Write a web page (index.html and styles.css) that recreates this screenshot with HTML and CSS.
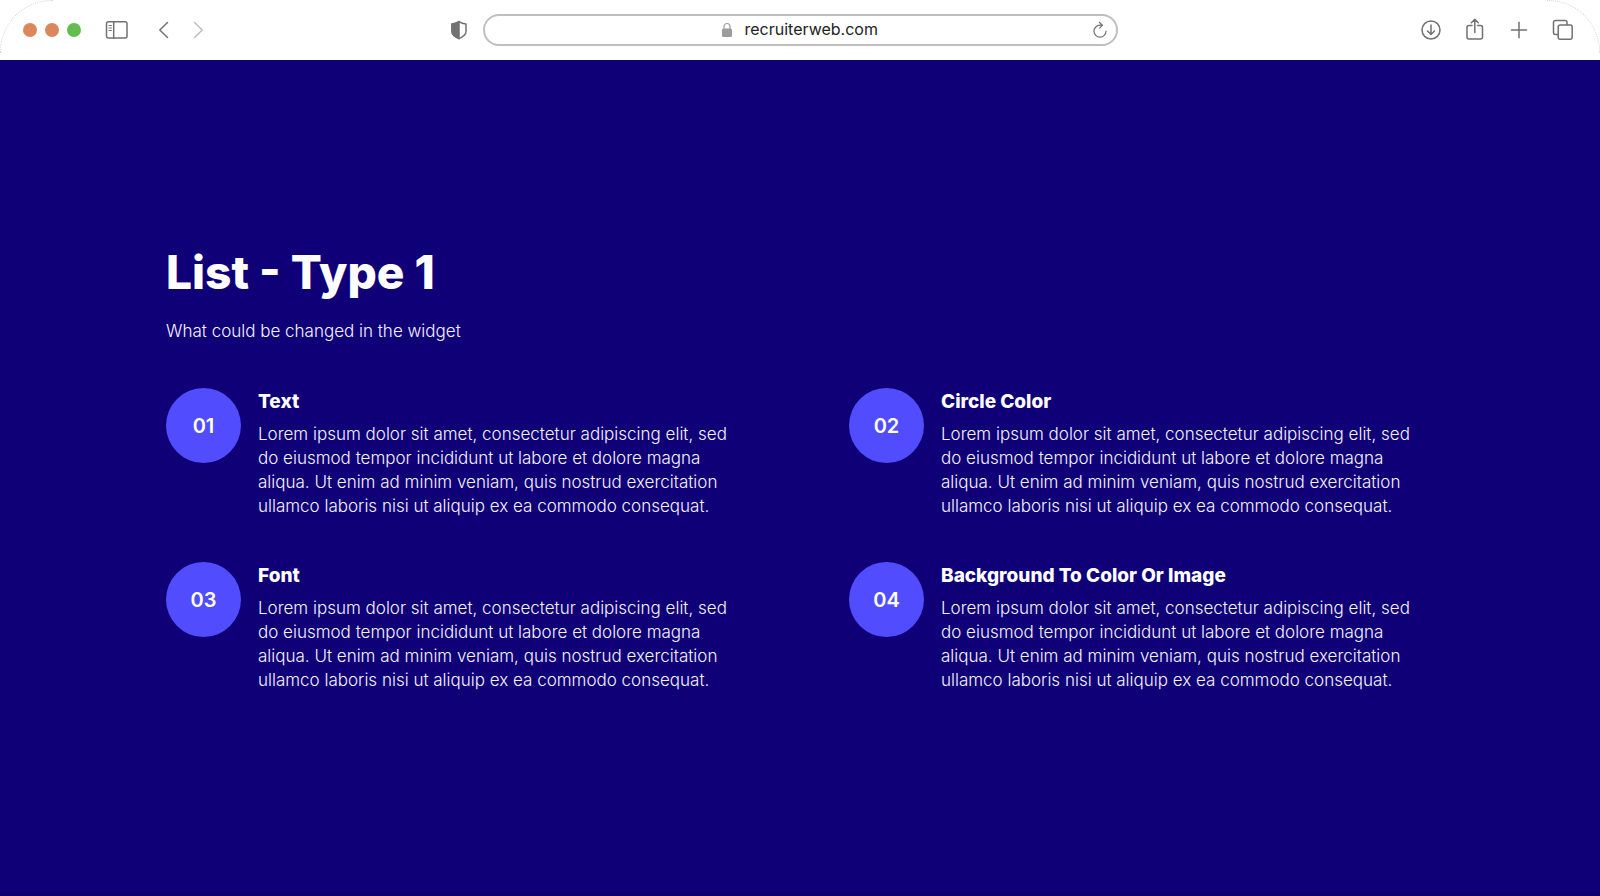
FILE: index.html
```html
<!DOCTYPE html>
<html lang="en">
<head>
  <meta charset="UTF-8">
  <meta name="viewport" content="width=device-width, initial-scale=1.0">
  <title>List - Type 1</title>
  <link rel="stylesheet" href="styles.css">
</head>
<body>

  <!-- Browser bar -->
  <header class="toolbar">
    <div class="tools tools-left">
      <div class="lights">
        <span class="light"></span>
        <span class="light"></span>
        <span class="light green"></span>
      </div>
      <button class="icon-btn sidebar" aria-label="Sidebar">
        <svg width="24" height="20" viewBox="0 0 24 20"><rect x="1.5" y="1.7" width="20.5" height="16.3" rx="2"/><path d="M8.7 1.7V18"/><path class="thin" d="M4 5.500h2.500M4 8h2.500M4 10.500h2.500"/></svg>
      </button>
      <button class="icon-btn back" aria-label="Back">
        <svg width="12" height="20" viewBox="0 0 12 20"><path d="M9.500 2.500L1.800 10l7.700 7.500"/></svg>
      </button>
      <button class="icon-btn forward" aria-label="Forward">
        <svg width="12" height="20" viewBox="0 0 12 20"><path d="M2.500 2.500l7.700 7.500-7.700 7.500"/></svg>
      </button>
      <button class="icon-btn shield" aria-label="Privacy report">
        <svg width="18" height="20" viewBox="0 0 18 20"><path d="M9 1.600C7 3 4.500 3.800 2 4v7.500c0 3.500 3.500 5.500 7 7.200 3.500-1.700 7-3.700 7-7.200V4c-2.500-.2-5-1-7-2.400z"/><path class="solid" d="M9 1.600C7 3 4.500 3.800 2 4v7.500c0 3.500 3.500 5.500 7 7.200z"/></svg>
      </button>
    </div>

    <form class="address">
      <svg class="lock" width="12" height="16" viewBox="0 0 12 16"><path d="M3 7V4.500a3 3 0 0 1 6 0V7"/><rect x="1" y="6.500" width="10" height="8.500" rx="1.500"/></svg>
      <input type="text" value="recruiterweb.com" aria-label="Address">
      <button type="button" class="icon-btn reload" aria-label="Reload">
        <svg width="16" height="18" viewBox="0 0 16 18"><path d="M14 10.200a6 6 0 1 1-6-6h2.500M7.500 1.500l3 2.700-2.800 3"/></svg>
      </button>
    </form>

    <div class="tools tools-right">
      <button class="icon-btn" aria-label="Downloads">
        <svg width="22" height="24" viewBox="0 0 22 24"><circle cx="11" cy="12" r="9"/><path d="M11 7v9.500M7.500 13l3.500 3.500 3.500-3.500"/></svg>
      </button>
      <button class="icon-btn" aria-label="Share">
        <svg width="22" height="24" viewBox="0 0 22 24"><path d="M8 7.500H5a2 2 0 0 0-2 2V19a2 2 0 0 0 2 2h11.500a2 2 0 0 0 2-2V9.500a2 2 0 0 0-2-2h-3M10.800 14.500V1.500M7.300 4.800l3.500-3.500 3.500 3.500"/></svg>
      </button>
      <button class="icon-btn" aria-label="New tab">
        <svg width="22" height="24" viewBox="0 0 22 24"><path d="M3.500 12h15M11 4.200v15.500"/></svg>
      </button>
      <button class="icon-btn" aria-label="All tabs">
        <svg width="22" height="24" viewBox="0 0 22 24"><path d="M6 16.500H3.500a2 2 0 0 1-2-2v-10a2 2 0 0 1 2-2H13a2 2 0 0 1 2 2v2"/><rect x="6.200" y="7" width="14" height="14.300" rx="2"/></svg>
      </button>
    </div>
  </header>

  <!-- List widget -->
  <main class="widget">
    <h1>List - Type 1</h1>
    <p class="subtitle">What could be changed in the widget</p>

    <div class="list">
      <article class="item">
        <div class="circle">01</div>
        <div class="item-text">
          <h2>Text</h2>
          <p>Lorem ipsum dolor sit amet, consectetur adipiscing elit, sed do eiusmod tempor incididunt ut labore et dolore magna aliqua. Ut enim ad minim veniam, quis nostrud exercitation ullamco laboris nisi ut aliquip ex ea commodo consequat.</p>
        </div>
      </article>
      <article class="item">
        <div class="circle">02</div>
        <div class="item-text">
          <h2>Circle Color</h2>
          <p>Lorem ipsum dolor sit amet, consectetur adipiscing elit, sed do eiusmod tempor incididunt ut labore et dolore magna aliqua. Ut enim ad minim veniam, quis nostrud exercitation ullamco laboris nisi ut aliquip ex ea commodo consequat.</p>
        </div>
      </article>
      <article class="item">
        <div class="circle">03</div>
        <div class="item-text">
          <h2>Font</h2>
          <p>Lorem ipsum dolor sit amet, consectetur adipiscing elit, sed do eiusmod tempor incididunt ut labore et dolore magna aliqua. Ut enim ad minim veniam, quis nostrud exercitation ullamco laboris nisi ut aliquip ex ea commodo consequat.</p>
        </div>
      </article>
      <article class="item">
        <div class="circle">04</div>
        <div class="item-text">
          <h2>Background To Color Or Image</h2>
          <p>Lorem ipsum dolor sit amet, consectetur adipiscing elit, sed do eiusmod tempor incididunt ut labore et dolore magna aliqua. Ut enim ad minim veniam, quis nostrud exercitation ullamco laboris nisi ut aliquip ex ea commodo consequat.</p>
        </div>
      </article>
    </div>
  </main>

</body>
</html>
```
FILE: styles.css
```css
* { box-sizing: border-box; }
body {
  margin: 0; min-height: 100vh;
  display: flex; flex-direction: column;
  font-family: Inter, sans-serif; background-color: #100078; color: white;
}
h1, h2, p { margin: 0; }

/* Browser bar */
.toolbar {
  position: relative;
  display: grid; grid-template-columns: 1fr minmax(0, 635px) 1fr; align-items: center;
  height: 60px; background-color: white;
}
.toolbar::before, .toolbar::after {
  content: ""; position: absolute; top: 0; width: 52px; height: 52px;
  pointer-events: none;
}
.toolbar::before {
  left: 0; border-top: 1px dotted #d4d4d4; border-left: 1px dotted #d4d4d4;
  border-top-left-radius: 52px;
}
.toolbar::after {
  right: 0; border-top: 1px dotted #d4d4d4; border-right: 1px dotted #d4d4d4;
  border-top-right-radius: 52px;
}
.tools { display: flex; align-items: center; }
.tools-left { padding: 0 15px 0 23px; }
.tools-right { justify-content: flex-end; gap: 22px; padding-right: 26px; }
.lights { display: flex; gap: 8px; }
.light { width: 14px; height: 14px; border-radius: 50%; background-color: #dc875b; }
.light.green { background-color: #62bd4e; }
.icon-btn {
  display: flex; padding: 0; border: none; background: none; color: #727272; cursor: pointer;
}
.icon-btn svg {
  fill: none; stroke: currentColor; stroke-width: 1.5;
  stroke-linecap: round; stroke-linejoin: round;
}
.icon-btn .solid { fill: currentColor; }
.icon-btn .thin { stroke-width: 1; }
.sidebar { margin-left: 24px; }
.back { margin-left: 29px; }
.forward { margin-left: 22px; color: #bdbdbd; }
.shield { margin-left: auto; }
.address {
  position: relative;
  display: flex; align-items: center; justify-content: center; gap: 12px;
  height: 32px; border: 2px solid #bfbfbf; border-radius: 16px;
}
.address input {
  width: 135px; height: 24px; padding: 0 0 2px; border: none; outline: none; background: none;
  font: 16px Inter, sans-serif; color: #222;
}
.lock { fill: #9c9c9c; }
.lock path { fill: none; stroke: #9c9c9c; stroke-width: 1.2; }
.reload { position: absolute; right: 8px; }
.reload svg { stroke-width: 1.2; }

/* List widget */
.widget {
  flex: 1; padding: 184px 166px 64px;
  border-bottom: 4px solid #0d006c;
}
h1 { font-size: 46px; line-height: 56px; font-weight: 800; }
p { font-size: 17px; line-height: 24px; font-weight: 300; color: #f4f3ff; }
.subtitle { margin-top: 19px; }
.list {
  display: grid; grid-template-columns: 1fr 1fr; gap: 44px 98px;
  margin-top: 45px;
}
.item { display: flex; align-items: flex-start; gap: 17px; }
.circle {
  flex: none; display: flex; align-items: center; justify-content: center;
  width: 75px; height: 75px; border-radius: 50%;
  background-color: #514dff; font-size: 20px; font-weight: 600;
}
.item-text { max-width: 480px; }
h2 { font-size: 19px; line-height: 28px; font-weight: 800; }
.item p { margin-top: 6px; }
```
